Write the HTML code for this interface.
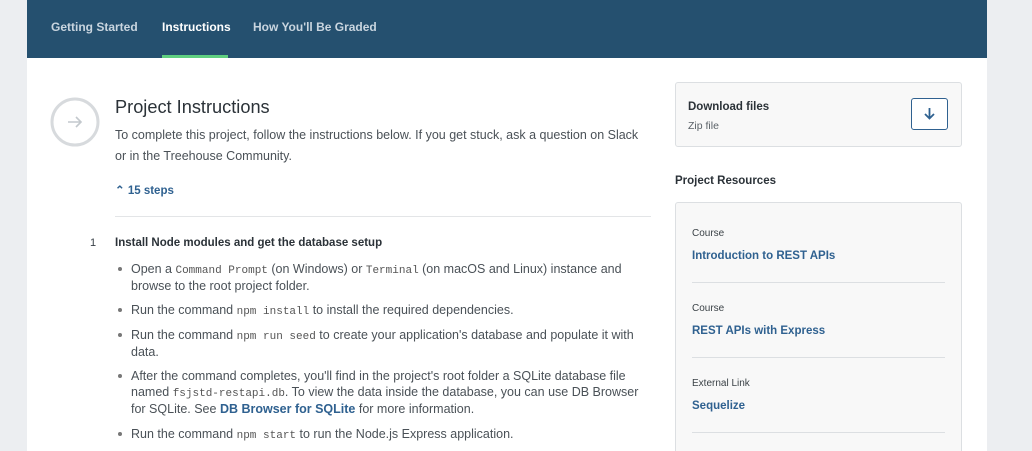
<!DOCTYPE html>
<html><head><meta charset="utf-8"><style>
*{margin:0;padding:0;box-sizing:border-box}
html,body{width:1032px;height:451px;overflow:hidden}
body{background:#eceef1;font-family:"Liberation Sans",sans-serif;color:#384047;position:relative}
.a{position:absolute;white-space:nowrap}
.main{position:absolute;left:27px;top:0;width:960px;height:451px;background:#fff}
.nav{position:absolute;left:27px;top:0;width:960px;height:58px;background:#25506f}
.nav span{position:absolute;top:20px;font-size:12px;font-weight:bold;color:#c9d5df}
.t{font-size:12.5px;line-height:17px;color:#4a5157}
code{font-family:"Liberation Mono",monospace;font-size:11px;color:#555}
.b{position:absolute;left:118px;width:4px;height:4px;border-radius:50%;background:#777}
.lnk{color:#2f6190;font-weight:bold}
</style></head><body>
<div class="main"></div>
<div class="nav">
<span style="left:24px">Getting Started</span>
<span style="left:135px;color:#fff">Instructions</span>
<span style="left:226px">How You'll Be Graded</span>
<div style="position:absolute;left:135px;top:55px;width:66px;height:3px;background:#5fcf80"></div>
</div>
<svg class="a" style="left:50px;top:97px" width="50" height="50"><circle cx="25" cy="25" r="23" fill="none" stroke="#d7dadd" stroke-width="3"/><path d="M18 25h13M26 20l5 5-5 5" fill="none" stroke="#c3c8cd" stroke-width="1.6"/></svg>
<div class="a" style="left:115px;top:97px;font-size:18.2px;color:#2b3238">Project Instructions</div>
<div class="a t" style="left:115px;top:127px">To complete this project, follow the instructions below. If you get stuck, ask a question on Slack</div>
<div class="a t" style="left:115px;top:148px">or in the Treehouse Community.</div>
<div class="a" style="left:115px;top:183px;font-size:11.5px;font-weight:bold;color:#2f6190">⌃ 15 steps</div>
<div class="a" style="left:115px;top:216px;width:536px;height:1px;background:#e3e5e7"></div>
<div class="a" style="left:90px;top:237px;font-size:11px">1</div>
<div class="a" style="left:115px;top:237px;font-size:11.5px;font-weight:bold;color:#2b3238">Install Node modules and get the database setup</div>
<div class="b" style="top:267px"></div><div class="a t" style="left:131px;top:261px">Open a <code>Command Prompt</code> (on Windows) or <code>Terminal</code> (on macOS and Linux) instance and</div>
<div class="a t" style="left:131px;top:278px">browse to the root project folder.</div>
<div class="b" style="top:308px"></div><div class="a t" style="left:131px;top:302px">Run the command <code>npm install</code> to install the required dependencies.</div>
<div class="b" style="top:333px"></div><div class="a t" style="left:131px;top:327px">Run the command <code>npm run seed</code> to create your application's database and populate it with</div>
<div class="a t" style="left:131px;top:344px">data.</div>
<div class="b" style="top:374px"></div><div class="a t" style="left:131px;top:368px">After the command completes, you'll find in the project's root folder a SQLite database file</div>
<div class="a t" style="left:131px;top:384px">named <code>fsjstd-restapi.db</code>. To view the data inside the database, you can use DB Browser</div>
<div class="a t" style="left:131px;top:401px">for SQLite. See <span class="lnk">DB Browser for SQLite</span> for more information.</div>
<div class="b" style="top:432px"></div><div class="a t" style="left:131px;top:426px">Run the command <code>npm start</code> to run the Node.js Express application.</div>

<div class="a" style="left:675px;top:82px;width:287px;height:65px;background:#f8f8f8;border:1px solid #dcdfe2;border-radius:3px"></div>
<div class="a" style="left:688px;top:101px;font-size:11.5px;font-weight:bold;color:#2b3238">Download files</div>
<div class="a" style="left:688px;top:120px;font-size:10.5px;color:#5a6167">Zip file</div>
<div class="a" style="left:911px;top:98px;width:37px;height:32px;border:1px solid #2f6190;border-radius:3px;background:#fff"></div>
<svg class="a" style="left:923px;top:107px" width="13" height="13"><path d="M6.5 1v10M2 7l4.5 4.5L11 7" fill="none" stroke="#2f6190" stroke-width="1.8"/></svg>
<div class="a" style="left:675px;top:175px;font-size:11.5px;font-weight:bold;color:#2b3238">Project Resources</div>
<div class="a" style="left:675px;top:202px;width:287px;height:260px;background:#f8f8f8;border:1px solid #dcdfe2;border-radius:3px"></div>
<div class="a" style="left:692px;top:228px;font-size:10px;color:#3b4247">Course</div>
<div class="a lnk" style="left:692px;top:250px;font-size:11.5px">Introduction to REST APIs</div>
<div class="a" style="left:692px;top:282px;width:253px;height:1px;background:#dcdfe2"></div>
<div class="a" style="left:692px;top:303px;font-size:10px;color:#3b4247">Course</div>
<div class="a lnk" style="left:692px;top:325px;font-size:11.5px">REST APIs with Express</div>
<div class="a" style="left:692px;top:357px;width:253px;height:1px;background:#dcdfe2"></div>
<div class="a" style="left:692px;top:378px;font-size:10px;color:#3b4247">External Link</div>
<div class="a lnk" style="left:692px;top:400px;font-size:11.5px">Sequelize</div>
<div class="a" style="left:692px;top:432px;width:253px;height:1px;background:#dcdfe2"></div>
</body></html>
